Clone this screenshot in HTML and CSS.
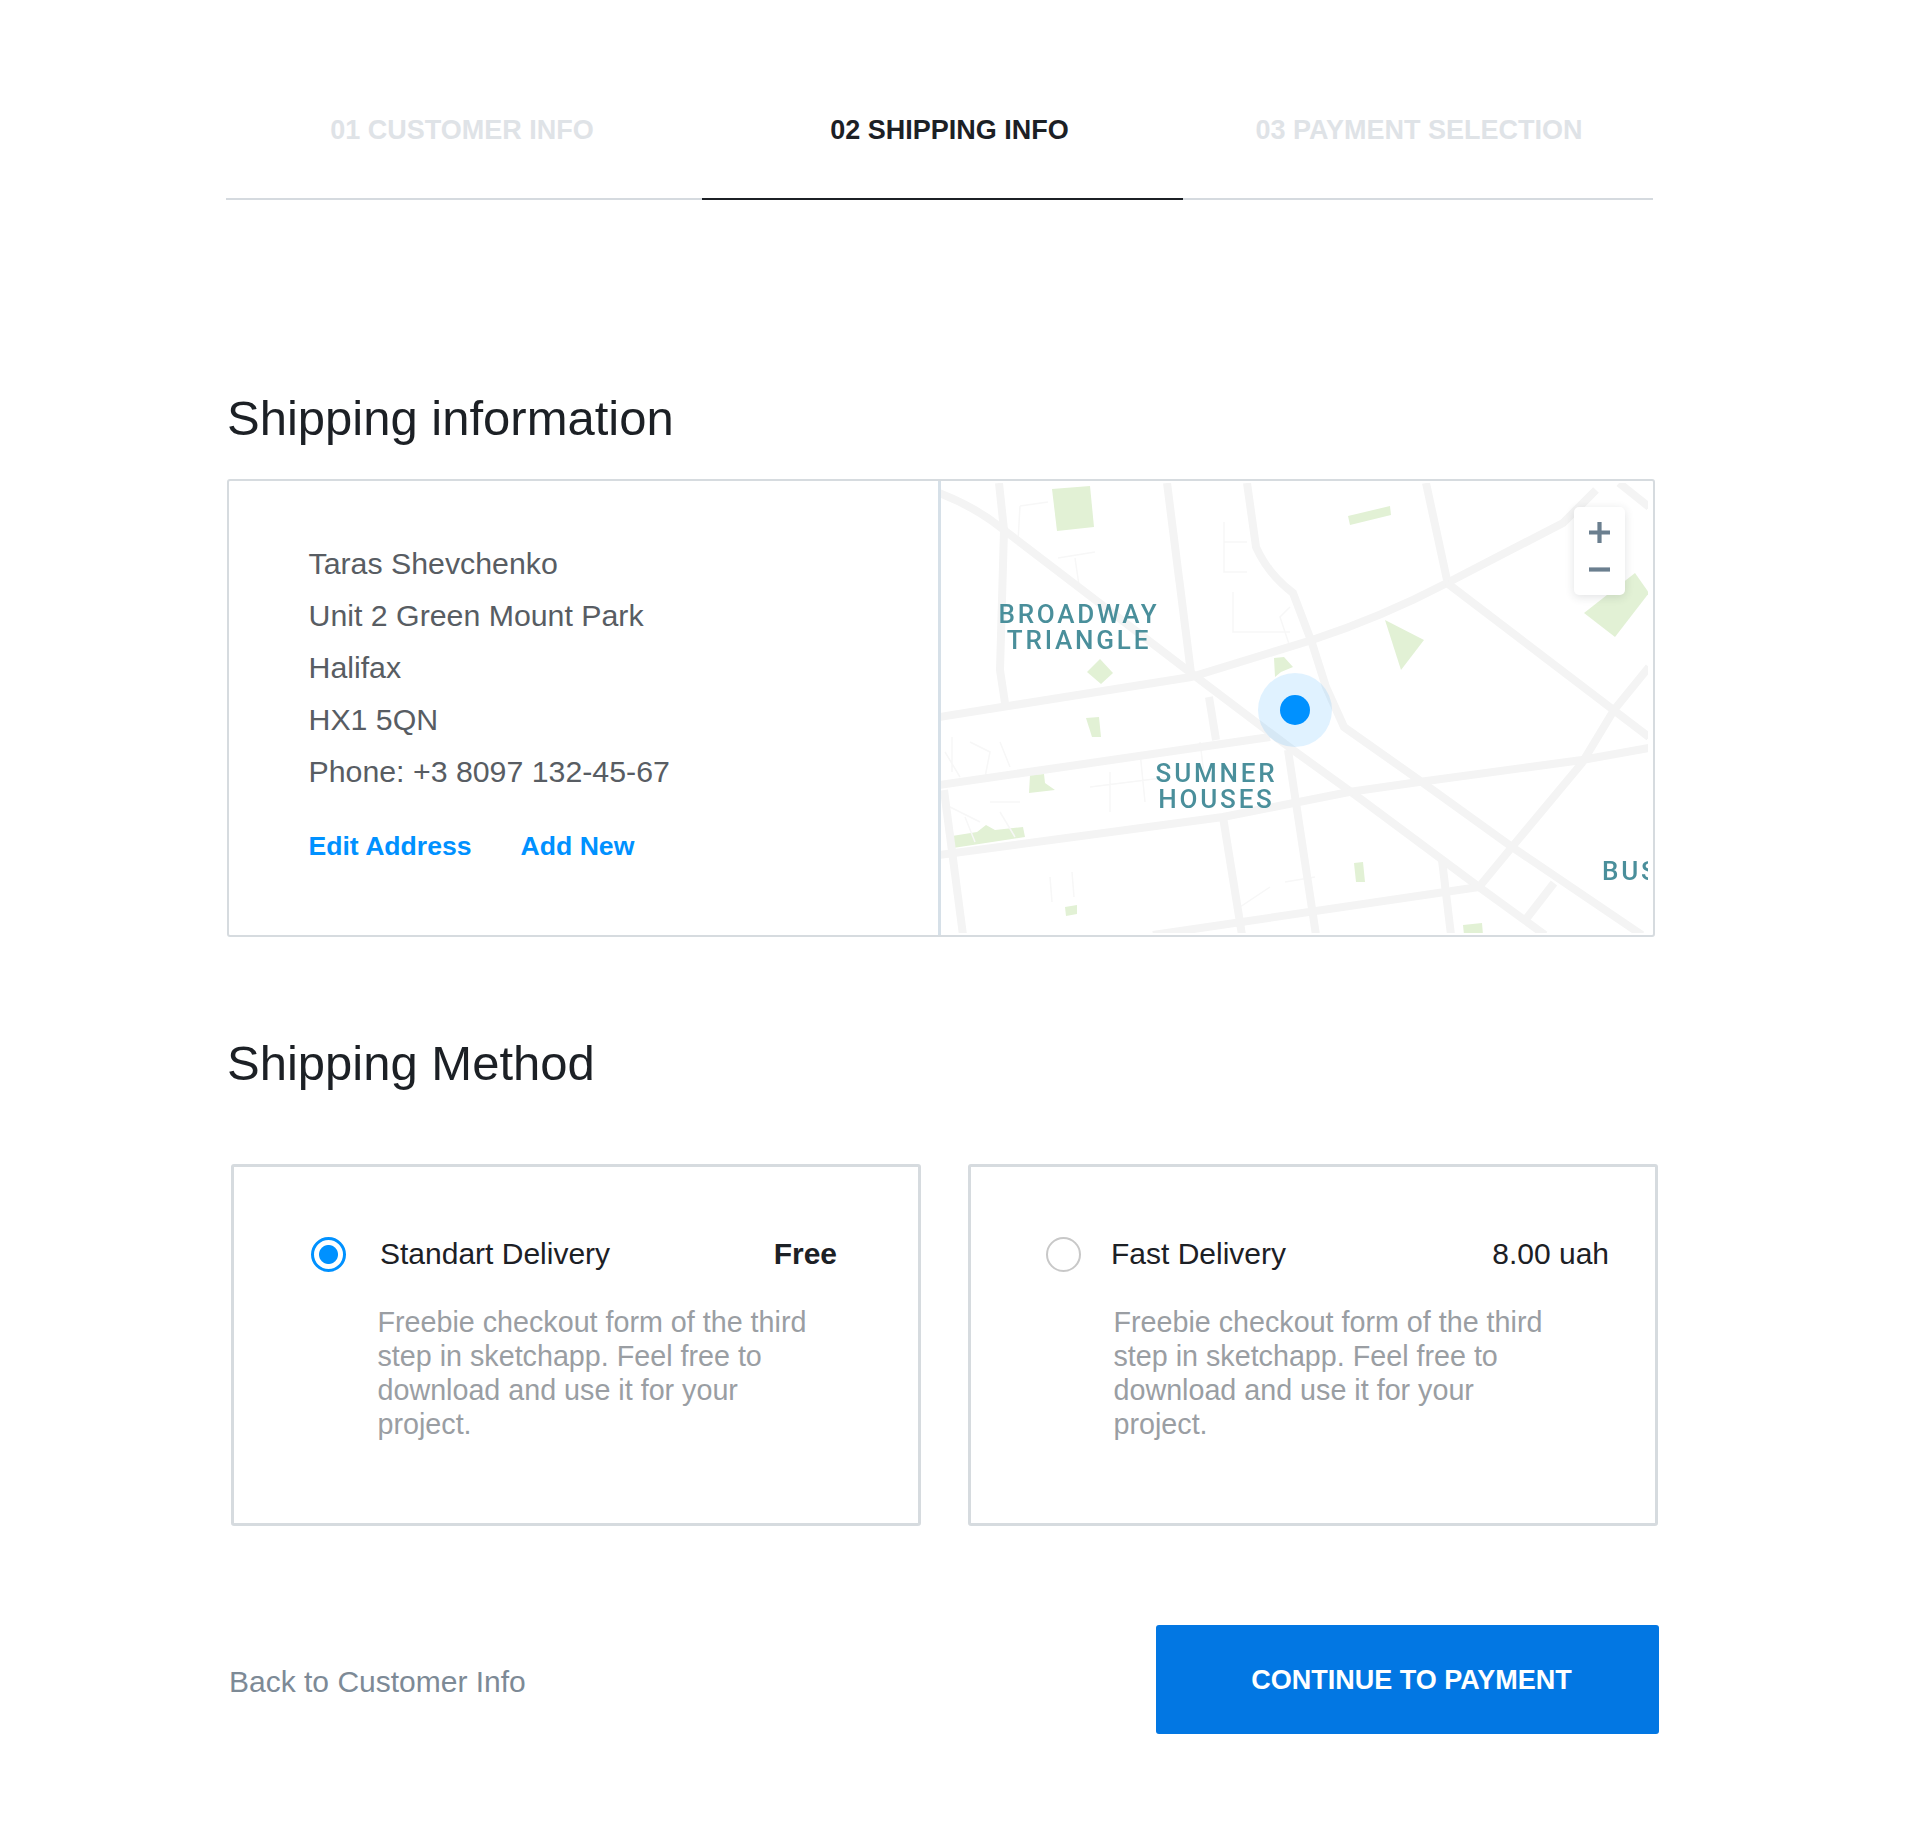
FILE: index.html
```html
<!DOCTYPE html>
<html lang="en">
<head>
<meta charset="utf-8">
<title>Shipping info</title>
<link rel="stylesheet" href="styles.css">
</head>
<body>
<main class="page">
  <nav class="tabs">
    <div class="tab tab-first">01 CUSTOMER INFO</div>
    <div class="tab tab-active">02 SHIPPING INFO</div>
    <div class="tab tab-last">03 PAYMENT SELECTION</div>
  </nav>

  <h1 class="heading heading-info">Shipping information</h1>
  <section class="address-card">
    <div class="address">
      <p class="address-line">Taras Shevchenko</p>
      <p class="address-line">Unit 2 Green Mount Park</p>
      <p class="address-line">Halifax</p>
      <p class="address-line">HX1 5QN</p>
      <p class="address-line">Phone: +3 8097 132-45-67</p>
      <div class="links">
        <a class="link" href="#">Edit Address</a>
        <a class="link" href="#">Add New</a>
      </div>
    </div>
    <div class="map">
      <svg class="map-svg" viewBox="1 1 707 450" width="707" height="450" aria-label="Map">
        <g class="parks">
          <polygon points="112,7 150,4 154,45 117,49"/>
          <polygon points="408,34 450,24 451,33 410,43"/>
          <polygon points="695,91 709,111 675,155 644,131"/>
          <polygon points="445,138 484,158 461,188"/>
          <polygon points="160,177 173,191 161,202 147,190"/>
          <polygon points="334,176 344,175 353,185 341,190 335,195"/>
          <polygon points="146,236 159,235 161,255 152,255"/>
          <polygon points="90,293 104,292 105,301 115,308 89,311"/>
          <polygon points="12,354 37,350 46,343 55,348 83,345 85,355 13,366"/>
          <polygon points="414,381 423,380 425,400 416,400"/>
          <polygon points="125,425 137,423 137,432 126,434"/>
          <polygon points="523,443 542,441 543,453 524,453"/>
        </g>
        <g class="tracery">
          <path d="M80 24 L108 20 M80 24 L78 60 M118 76 L155 70 M135 76 L140 110"/>
          <path d="M284 40 L284 90 L307 90 M284 60 L307 60 M293 110 L293 150 L350 150 M350 125 L340 135 L350 165"/>
          <path d="M5 270 L20 295 M12 255 L12 290 M30 260 L50 270 L45 295 M60 260 L70 285"/>
          <path d="M10 325 L40 340 M25 335 L35 360 M60 330 L75 355 M50 320 L80 320"/>
          <path d="M170 290 L170 330 M200 270 L205 320 M150 305 L230 295 M260 260 L265 300"/>
          <path d="M110 395 L112 420 M132 390 L134 415 M300 425 L330 405 M345 400 L375 395"/>
        </g>
        <g class="roads">
          <path d="M-1 11 Q35 25 60 45 L251 191 L353 268 L418 315 L539 405"/>
          <path d="M59 1 L64 48 L60 188 L65 221"/>
          <path d="M227 1 L251 191"/>
          <path d="M307 1 L316 65 Q328 92 353 111 L372 161 L386 205 L404 245 L479 298 L572 365 L702 453"/>
          <path d="M486 1 L507 98"/>
          <path d="M-1 235 L251 195 L372 158 Q442 135 507 101 L623 41 L656 8"/>
          <path d="M507 101 L709 255"/>
          <path d="M709 185 L674 228 L642 281 L572 365 L539 405"/>
          <path d="M-1 303 L330 255"/>
          <path d="M-1 373 L283 335 L409 310 L479 300 L642 278 L709 266"/>
          <path d="M269 215 L276 258"/>
          <path d="M348 268 L376 453"/>
          <path d="M283 335 L302 453"/>
          <path d="M4 308 L23 453"/>
          <path d="M213 453 L539 405"/>
          <path d="M502 378 L511 453"/>
          <path d="M614 401 L583 441"/>
          <path d="M539 405 L605 453"/>
          <path d="M679 1 L709 25"/>
        </g>
        <g class="map-labels">
          <text class="map-label" x="139" y="141" text-anchor="middle">BROADWAY</text>
          <text class="map-label" x="139" y="167" text-anchor="middle">TRIANGLE</text>
          <text class="map-label" x="276.5" y="300" text-anchor="middle">SUMNER</text>
          <text class="map-label" x="276.5" y="326" text-anchor="middle">HOUSES</text>
          <text class="map-label" x="662" y="398">BUS</text>
        </g>
        <circle class="pin-halo" cx="355" cy="228" r="37"/>
        <circle class="pin-dot" cx="355" cy="228" r="15"/>
      </svg>
      <div class="zoom-control">
        <svg class="zoom-icon" viewBox="0 0 20 20" width="21" height="21"><path d="M10 0V20M0 10H20"/></svg>
        <svg class="zoom-icon" viewBox="0 0 20 20" width="21" height="21"><path d="M0 10H20"/></svg>
      </div>
    </div>
  </section>

  <h2 class="heading heading-method">Shipping Method</h2>
  <section class="methods">
    <article class="method method-standard">
      <div class="method-head">
        <span class="radio radio-on"></span>
        <span class="method-name">Standart Delivery</span>
        <span class="method-price method-price-bold">Free</span>
      </div>
      <p class="method-desc">Freebie checkout form of the third step in sketchapp. Feel free to download and use it for your project.</p>
    </article>
    <article class="method method-fast">
      <div class="method-head">
        <span class="radio"></span>
        <span class="method-name">Fast Delivery</span>
        <span class="method-price">8.00 uah</span>
      </div>
      <p class="method-desc">Freebie checkout form of the third step in sketchapp. Feel free to download and use it for your project.</p>
    </article>
  </section>

  <footer class="actions">
    <a class="back" href="#">Back to Customer Info</a>
    <button class="continue" type="button">CONTINUE TO PAYMENT</button>
  </footer>
</main>
</body>
</html>
```
FILE: styles.css
```css
* { box-sizing: border-box; }
html, body { margin: 0; padding: 0; background: #fff; }
body { font-family: "Liberation Sans", Arial, sans-serif; color: #1c2025; }
.page { width: 1910px; min-height: 1826px; padding: 0 250px 0 226px; }

.tabs { display: grid; grid-template-columns: 476px 481px 470px; width: 1427px; }
.tab { height: 200px; padding-top: 110px; line-height: 40px; font-size: 27px; font-weight: 700; text-align: center; color: #dfe3e7; border-bottom: 2px solid #d5dadf; }
.tab-first { padding-right: 4px; }
.tab-active { color: #1c2025; border-bottom-color: #1c2025; padding-left: 14px; }
.tab-last { padding-left: 2px; }

.heading { margin: 0; font-weight: 400; font-size: 49px; line-height: 60px; color: #1c2025; padding-left: 1px; }
.heading-info { margin-top: 188px; margin-bottom: 31px; }
.heading-method { margin-top: 96px; margin-bottom: 71px; }

.address-card { display: flex; width: 1428px; height: 458px; margin-left: 1px; border: 2px solid #d6dbdf; border-radius: 3px; }
.address { width: 712px; padding: 57px 0 0 79.5px; border-right: 3px solid #d6e0e8; }
.address-line { margin: 0; font-size: 30.3px; line-height: 52px; color: #585d63; }
.links { display: flex; gap: 49px; margin-top: 28px; }
.link { font-size: 26.6px; font-weight: 700; line-height: 40px; color: #0091ff; text-decoration: none; }

.map { position: relative; flex: 1; padding: 2px 6px 0 0; overflow: hidden; }
.map-svg { display: block; filter: blur(.5px); }
.parks polygon { fill: #e2f1d5; }
.roads path { fill: none; stroke: #f4f4f4; stroke-width: 8; }
.tracery path { fill: none; stroke: #f7f7f7; stroke-width: 1.5; }
.map-label { font-family: Roboto, sans-serif; font-size: 26px; font-weight: 500; letter-spacing: 2.8px; fill: #4a8f9b; }
.pin-halo { fill: #0091ff; fill-opacity: .12; }
.pin-dot { fill: #0091ff; }

.zoom-control { position: absolute; top: 26px; left: 633px; width: 51px; height: 88px; display: flex; flex-direction: column; align-items: center; justify-content: center; gap: 16px; background: #fff; border-radius: 5px; box-shadow: 0 2px 10px rgba(40, 50, 60, .14); }
.zoom-icon { display: block; }
.zoom-icon path { fill: none; stroke: #6b7f8f; stroke-width: 4; }

.methods { display: flex; gap: 47px; margin-left: 5px; width: 1432px; }
.method { width: 690px; height: 362px; padding-top: 67px; border: 3px solid #d6dbdf; border-radius: 3px; }
.method-head { display: flex; align-items: center; height: 40px; }
.method-name { font-size: 30px; color: #1c2025; }
.method-price { margin-left: auto; font-size: 30px; color: #1c2025; }
.method-price-bold { font-weight: 700; }
.method-desc { margin: 30.5px 0 0; width: 440px; font-size: 28.7px; line-height: 34.2px; color: #9a9ea3; }
.radio { flex: none; width: 35px; height: 35px; border-radius: 50%; border: 2px solid #c8c8c8; background: #fff; }
.radio-on { border: 3px solid #0091ff; background: radial-gradient(circle, #0091ff 0 9px, #fff 10px); }
.method-standard { padding-left: 77px; padding-right: 81px; }
.method-standard .method-name { margin-left: 34px; }
.method-standard .method-desc { margin-left: 66.5px; }
.method-fast { padding-left: 75px; padding-right: 46px; }
.method-fast .method-name { margin-left: 30px; }
.method-fast .method-desc { margin-left: 67.5px; }

.actions { display: flex; justify-content: space-between; align-items: center; width: 1433px; margin-top: 99px; padding-left: 3px; }
.back { padding-top: 4px; font-size: 30px; color: #7d8a96; text-decoration: none; }
.continue { width: 503px; height: 109px; padding: 1px 0 0 8px; border: 0; border-radius: 3px; background: #0277e3; color: #fff; font-family: inherit; font-size: 27px; font-weight: 700; }
```
